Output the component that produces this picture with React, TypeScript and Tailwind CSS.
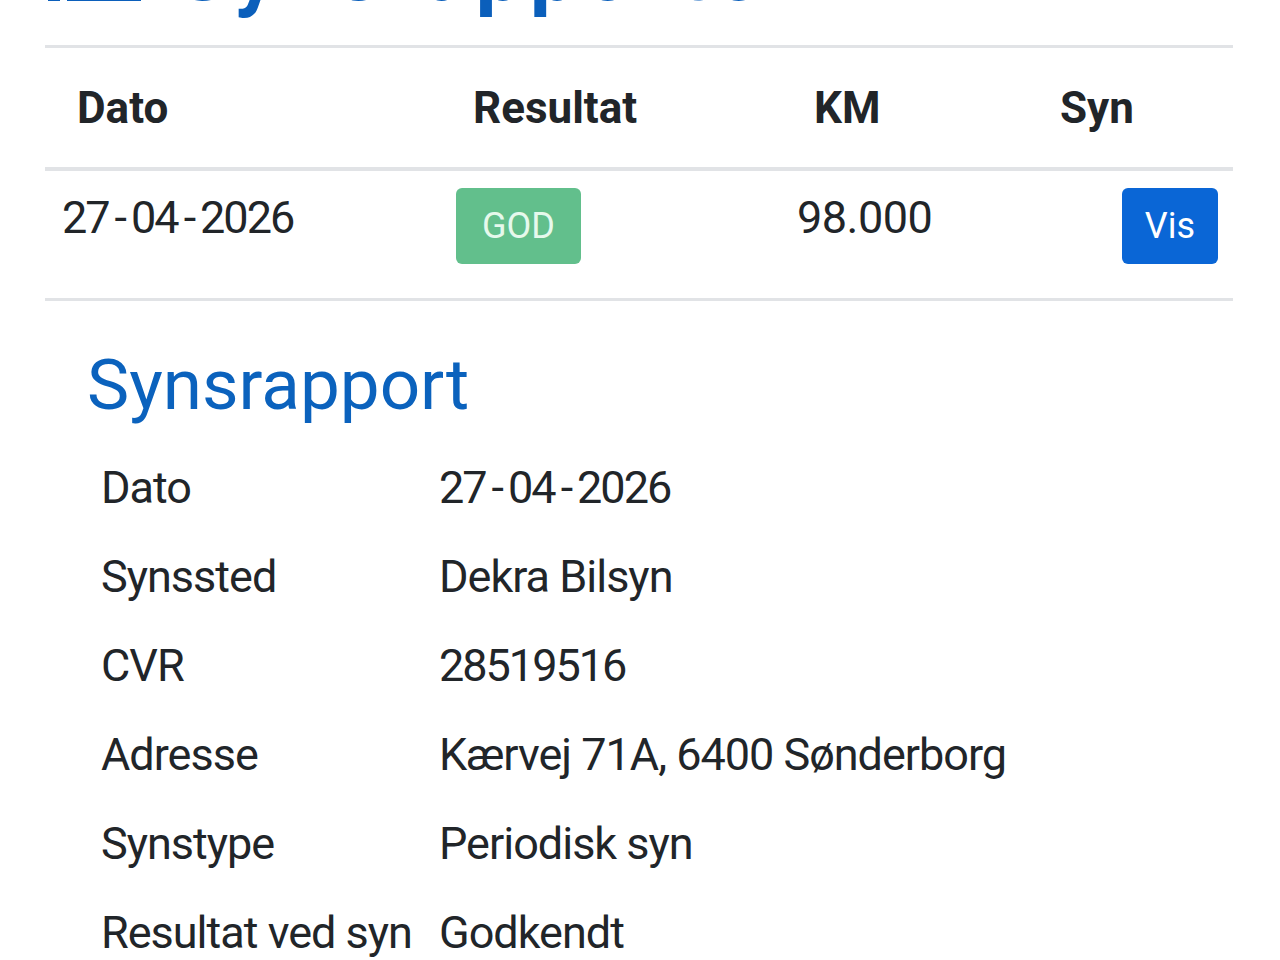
import React from "react";

const font = { fontFamily: "Roboto, 'Liberation Sans', sans-serif" };

function DateText({ value }: { value: string }) {
  const parts = value.split("-");
  return (
    <span className="tracking-[-2px] whitespace-nowrap">
      {parts.map((p, i) => (
        <React.Fragment key={i}>
          {i > 0 && <span className="mx-[6px]">-</span>}
          {p}
        </React.Fragment>
      ))}
    </span>
  );
}

export default function App() {
  const details: [string, React.ReactNode][] = [
    ["Dato", <DateText value="27-04-2026" />],
    ["Synssted", "Dekra Bilsyn"],
    ["CVR", <span className="tracking-[-2px]">28519516</span>],
    ["Adresse", "Kærvej 71A, 6400 Sønderborg"],
    ["Synstype", "Periodisk syn"],
    ["Resultat ved syn", "Godkendt"],
  ];
  return (
    <div
      className="w-[1280px] h-[960px] overflow-hidden bg-white pl-[45px] pr-[47px] text-[#212529]"
      style={font}
    >
      {/* Cut-off top heading */}
      <div className="h-[45px] overflow-hidden">
        <div className="flex items-end gap-[34px] mt-[-70px] h-[84px] leading-none">
          <svg width="96" height="70" viewBox="0 0 96 70" className="mb-[13px] shrink-0">
            <rect x="3" y="0" width="12" height="12" fill="#0b5fbb" />
            <rect x="22" y="0" width="74" height="12" fill="#0b5fbb" />
            <rect x="3" y="29" width="12" height="12" fill="#0b5fbb" />
            <rect x="22" y="29" width="74" height="12" fill="#0b5fbb" />
            <rect x="3" y="58" width="12" height="12" fill="#0b5fbb" />
            <rect x="22" y="58" width="74" height="12" fill="#0b5fbb" />
          </svg>
          <h1 className="text-[84px] font-bold text-[#0b5fbb] leading-none whitespace-nowrap tracking-[7px]">
            Synsrapporter
          </h1>
        </div>
      </div>

      {/* Table */}
      <div className="border-t-[3px] border-[#e1e3e6]">
        <div className="flex h-[123px] items-center text-[44px] font-bold border-b-[4px] border-[#e1e3e6]">
          <div className="w-[395px] pl-[32px]">Dato</div>
          <div className="w-[341px] pl-[33px]">Resultat</div>
          <div className="w-[246px] pl-[33px]">KM</div>
          <div className="w-[206px] pl-[33px]">Syn</div>
        </div>
        <div className="flex h-[130px] items-start text-[45px] border-b-[3px] border-[#e1e3e6]">
          <div className="w-[395px] pl-[17px] pt-[13px] leading-[1.5]">
            <DateText value="27-04-2026" />
          </div>
          <div className="w-[341px] pl-[16px] pt-[17px]">
            <div className="w-[125px] h-[76px] rounded-[6px] bg-[#62bf8c] text-[#e6f9ec] text-[36px] flex items-center justify-center">
              GOD
            </div>
          </div>
          <div className="w-[246px] pl-[16px] pt-[13px] leading-[1.5] tracking-[-0.5px]">98.000</div>
          <div className="w-[206px] pr-[15px] pt-[17px] flex justify-end">
            <div className="w-[96px] h-[76px] rounded-[6px] bg-[#0a66d6] text-white text-[36px] flex items-center justify-center">
              Vis
            </div>
          </div>
        </div>
      </div>

      {/* Synsrapport */}
      <h2 className="ml-[42px] mt-[48px] text-[71px] leading-none text-[#0b62bd] font-normal">
        Synsrapport
      </h2>
      <div className="mt-[23px] ml-[56px]">
        {details.map(([k, v]) => (
          <div key={k} className="flex h-[89px] items-center text-[45px] leading-none tracking-[-1px]">
            <div className="w-[338px] whitespace-nowrap">{k}</div>
            <div className="whitespace-nowrap">{v}</div>
          </div>
        ))}
      </div>
    </div>
  );
}
